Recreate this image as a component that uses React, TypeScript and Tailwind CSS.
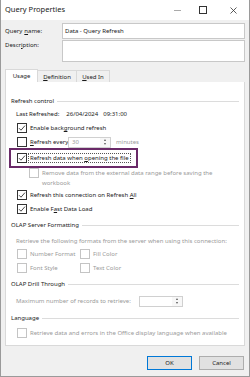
import React from "react";

const Check = ({ checked = false, disabled = false }: { checked?: boolean; disabled?: boolean }) => (
  <span
    className={`w-[10px] h-[10px] shrink-0 border bg-white flex items-center justify-center ${
      disabled ? "border-[#c4c4c4]" : "border-[#333]"
    }`}
  >
    {checked && (
      <svg width="8" height="8" viewBox="0 0 8 8">
        <path d="M1 4.2 L3 6.2 L7 1.6" fill="none" stroke="#333" strokeWidth="0.9" />
      </svg>
    )}
  </span>
);

const Group = ({ title, h }: { title: string; h: string }) => (
  <div className={`${h} flex items-center gap-[3px] pl-[5px] pr-[5px]`}>
    <span className="whitespace-nowrap text-[#1a1a1a]">{title}</span>
    <span className="flex-1 h-px bg-[#dcdcdc]" />
  </div>
);

const CheckRow = ({
  h,
  label,
  checked,
  disabled,
  indent = "pl-[11px]",
}: {
  h: string;
  label: React.ReactNode;
  checked?: boolean;
  disabled?: boolean;
  indent?: string;
}) => (
  <div className={`${h} flex items-center gap-[3px] ${indent}`}>
    <Check checked={checked} disabled={disabled} />
    <span className={`whitespace-nowrap ${disabled ? "text-[#9a9a9a]" : "text-[#1a1a1a]"}`}>{label}</span>
  </div>
);

const Spin = ({ w, value }: { w: string; value?: string }) => (
  <div className={`${w} h-[11px] shrink-0 flex border border-[#d0d0d0] bg-white`}>
    <span className="flex-1 pl-[3px] flex items-center text-[#9a9a9a]">{value}</span>
    <span className="w-[10px] flex flex-col items-center justify-center gap-[2px] bg-[#f7f7f7]">
      <span className="w-0 h-0 border-l-[1.5px] border-r-[1.5px] border-b-[2px] border-l-transparent border-r-transparent border-b-[#555]" />
      <span className="w-0 h-0 border-l-[1.5px] border-r-[1.5px] border-t-[2px] border-l-transparent border-r-transparent border-t-[#555]" />
    </span>
  </div>
);

export default function App() {
  return (
    <div
      className="w-[250px] h-[377px] bg-[#f0f0f0] border-l border-r border-b border-[#9a9a9a] flex flex-col text-[6px] leading-none text-[#1a1a1a] overflow-hidden"
      style={{ fontFamily: '"Noto Sans", sans-serif' }}
    >
      {/* title bar */}
      <div className="h-[20px] bg-white flex items-center pl-[4px] shrink-0">
        <span className="text-[7.5px] flex-1">Query Properties</span>
        <span className="w-[7px] h-px bg-[#aaa] mr-[18px]" />
        <span className="w-[8px] h-[8px] border border-[#333] mr-[23px]" />
        <svg width="7" height="7" viewBox="0 0 7 7" className="mr-[12px]">
          <path d="M0.5 0.5 L6.5 6.5 M6.5 0.5 L0.5 6.5" stroke="#333" strokeWidth="0.8" />
        </svg>
      </div>

      <div className="flex-1 flex flex-col px-[4px]">
        <div className="mt-[3px] h-[16px] flex">
          <span className="w-[57px] flex items-center">
            Query <span className="underline ml-[2px]">n</span>ame:
          </span>
          <span className="flex-1 border border-[#c8c8c8] bg-white flex items-center pl-[2px]">
            Data - Query Refresh
          </span>
        </div>
        <div className="mt-[1px] h-[22px] flex">
          <span className="w-[57px] pt-[2px]">
            Descr<span className="underline">i</span>ption:
          </span>
          <span className="flex-1 border border-[#c8c8c8] bg-white" />
        </div>

        {/* tabs */}
        <div className="mt-[7px] h-[13px] flex items-end">
          <span className="w-[33px] h-[13px] bg-white border border-b-0 border-[#d9d9d9] flex items-center justify-center">
            Usage
          </span>
          <span className="w-[39px] h-[12px] border-t border-r border-[#d9d9d9] flex items-center justify-center">
            <span className="underline">D</span>efinition
          </span>
          <span className="w-[33px] h-[12px] border-t border-r border-[#d9d9d9] flex items-center justify-center">
            <span className="underline">U</span>sed In
          </span>
        </div>

        {/* panel */}
        <div className="h-[264px] bg-white border border-t-0 border-[#d9d9d9] flex flex-col pt-[12px]">
          <Group title="Refresh control" h="h-[14px]" />
          <div className="h-[12px] flex items-center pl-[10px] whitespace-nowrap">
            Last Refreshed:<span className="ml-[7px]">26/04/2024</span>
            <span className="ml-[5px]">09:31:00</span>
          </div>
          <CheckRow
            h="h-[16px]"
            checked
            label={
              <>
                Enable back<span className="underline">g</span>round refresh
              </>
            }
          />
          <div className="h-[12px] flex items-center gap-[3px] pl-[11px]">
            <Check />
            <span className="w-[35px] shrink-0 whitespace-nowrap">
              <span className="underline">R</span>efresh every
            </span>
            <Spin w="w-[43px]" value="30" />
            <span className="ml-[2px] text-[#9a9a9a]">minutes</span>
          </div>
          <div className="h-[20px] flex items-center">
            <div className="ml-[3px] w-[129px] h-[20px] border-2 border-[#6a2a68] flex items-center gap-[2px] pl-[6px]">
              <Check checked />
              <span className="whitespace-nowrap outline outline-1 outline-dotted outline-[#555] px-[1px] py-[1px]">
                Refresh data when <span className="underline">o</span>pening the file
              </span>
            </div>
          </div>
          <CheckRow
            h="h-[9px]"
            indent="pl-[23px]"
            disabled
            label="Remove data from the external data range before saving the"
          />
          <div className="h-[11px] flex items-center pl-[36px] text-[#9a9a9a]">workbook</div>
          <CheckRow
            h="h-[14px]"
            checked
            label={
              <>
                Refresh this connection on Refresh <span className="underline">A</span>ll
              </>
            }
          />
          <CheckRow
            h="h-[14px]"
            checked
            label={
              <>
                Enable F<span className="underline">a</span>st Data Load
              </>
            }
          />
          <Group title="OLAP Server Formatting" h="h-[18px]" />
          <div className="h-[14px] flex items-center pl-[10px] text-[#9a9a9a] whitespace-nowrap">
            Retrieve the following formats from the server when using this connection:
          </div>
          <div className="h-[12px] flex items-center pl-[11px]">
            <span className="w-[63px] flex items-center gap-[3px]">
              <Check disabled />
              <span className="text-[#9a9a9a]">Number Format</span>
            </span>
            <Check disabled />
            <span className="ml-[3px] text-[#9a9a9a]">Fill Color</span>
          </div>
          <div className="h-[16px] flex items-center pl-[11px]">
            <span className="w-[63px] flex items-center gap-[3px]">
              <Check disabled />
              <span className="text-[#9a9a9a]">Font Style</span>
            </span>
            <Check disabled />
            <span className="ml-[3px] text-[#9a9a9a]">Text Color</span>
          </div>
          <Group title="OLAP Drill Through" h="h-[16px]" />
          <div className="h-[18px] flex items-center pl-[10px]">
            <span className="w-[123px] text-[#9a9a9a] whitespace-nowrap">
              Maximum number of records to retrieve:
            </span>
            <Spin w="w-[44px]" />
          </div>
          <Group title="Language" h="h-[16px]" />
          <CheckRow
            h="h-[14px]"
            disabled
            label="Retrieve data and errors in the Office display language when available"
          />
        </div>

        {/* buttons */}
        <div className="mt-[10px] flex justify-end gap-[7px] pr-[1px]">
          <button className="w-[45px] h-[14px] bg-[#e1e1e1] border border-[#0078d7] text-[6px]">OK</button>
          <button className="w-[45px] h-[14px] bg-[#e1e1e1] border border-[#adadad] text-[6px]">Cancel</button>
        </div>
      </div>
    </div>
  );
}
